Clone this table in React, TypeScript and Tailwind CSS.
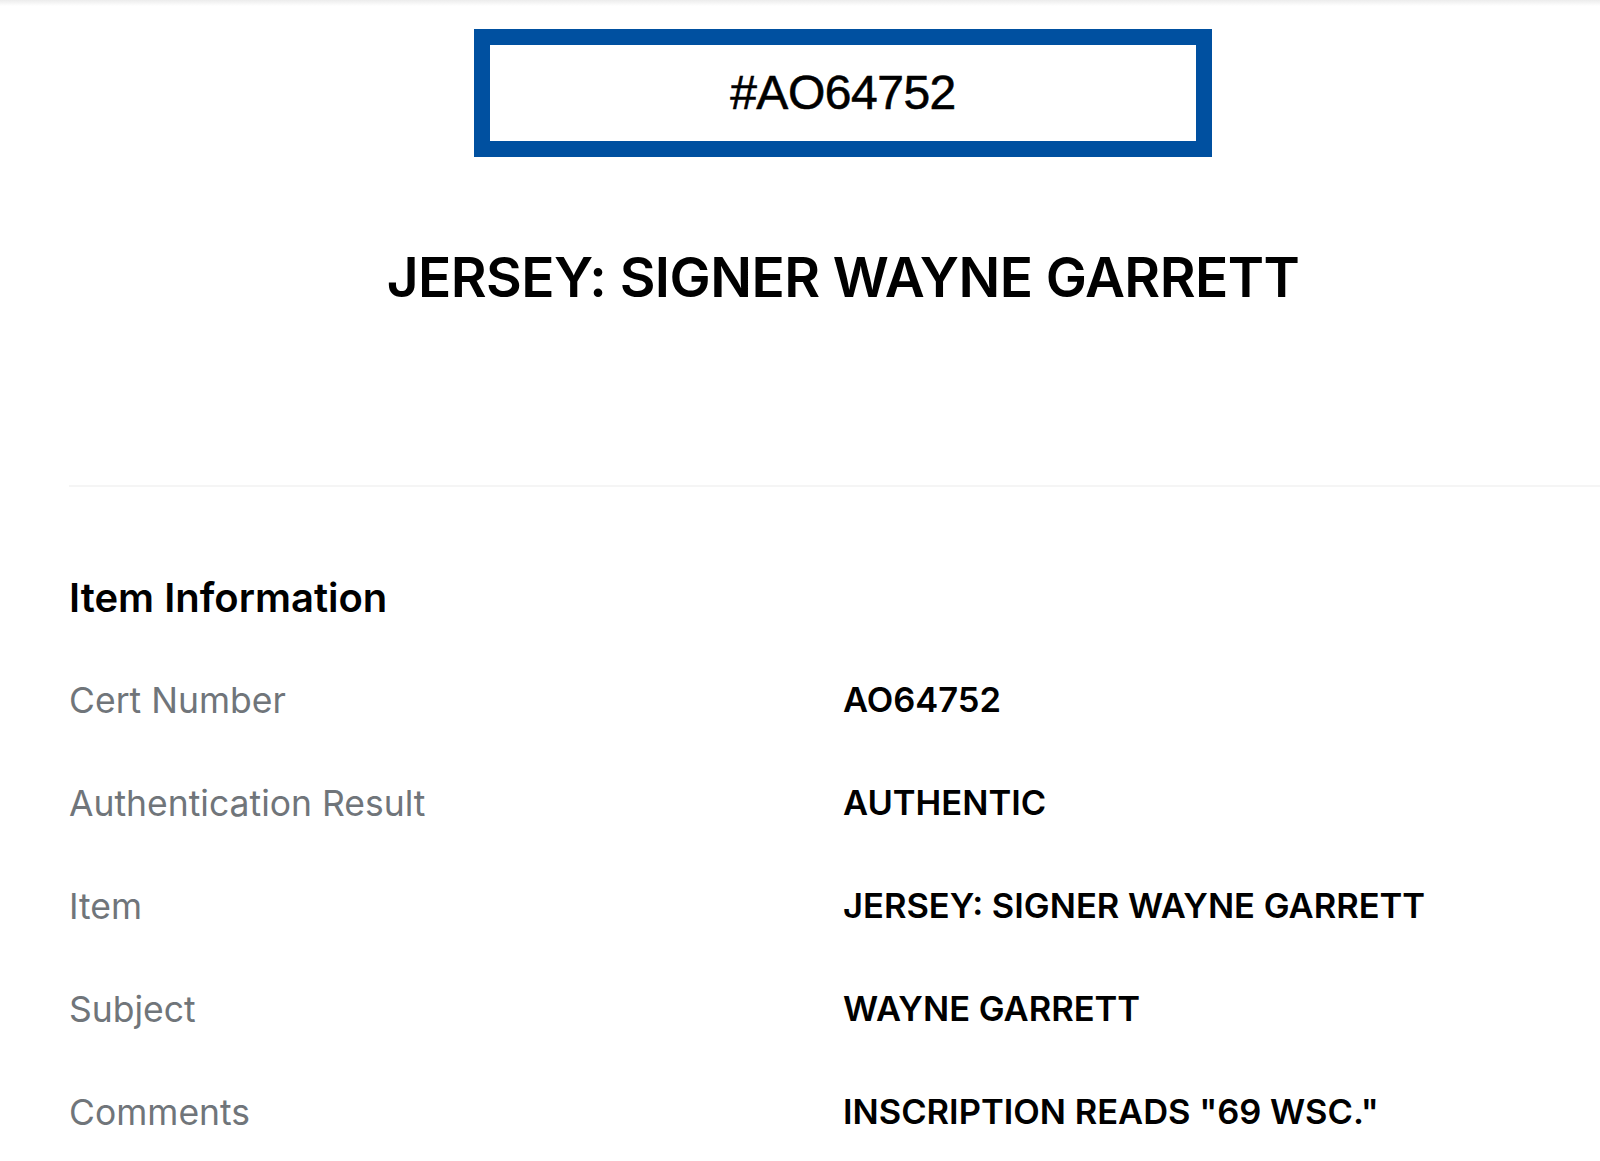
const rows = [
  { label: "Cert Number", value: "AO64752" },
  { label: "Authentication Result", value: "AUTHENTIC" },
  { label: "Item", value: "JERSEY: SIGNER WAYNE GARRETT" },
  { label: "Subject", value: "WAYNE GARRETT" },
  { label: "Comments", value: 'INSCRIPTION READS "69 WSC."' },
]

export default function App() {
  return (
    <div className="min-h-screen w-full overflow-hidden bg-white font-['Inter',sans-serif] text-black">
      <div className="h-[6px] bg-gradient-to-b from-[#ececec] to-white" />
      <div className="ml-[69px] w-[1548px]">
        <div className="mx-auto mt-[23px] flex h-[128px] w-[738px] items-center justify-center border-[16px] border-[#0050a0] bg-white">
          <span className="font-['Liberation_Sans',Arial,sans-serif] text-[48px] leading-none tracking-[-0.01em] text-black [-webkit-text-stroke:0.6px_black]">
            #AO64752
          </span>
        </div>

        <div className="mt-[80px] flex h-[80px] items-center justify-center">
          <h1 className="text-[55px] font-semibold leading-none tracking-[-0.01em]">
            JERSEY: SIGNER WAYNE GARRETT
          </h1>
        </div>

        <div className="mt-[168px] h-[2px] bg-[#f5f5f5]" />

        <div className="mt-[86px] flex h-[50px] items-center">
          <h2 className="text-[40px] font-semibold leading-none">Item Information</h2>
        </div>

        <div className="mt-[26px]">
          {rows.map((row) => (
            <div key={row.label} className="grid h-[103px] grid-cols-2 items-center">
              <div className="text-[35.5px] leading-none text-[#70757a]">{row.label}</div>
              <div className="text-[34.5px] font-semibold leading-none">{row.value}</div>
            </div>
          ))}
        </div>
      </div>
    </div>
  )
}
